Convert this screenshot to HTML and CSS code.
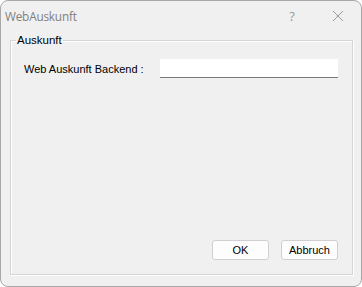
FILE: index.html
```html
<!DOCTYPE html>
<html>
<head>
<meta charset="utf-8">
<link rel="stylesheet" href="styles.css">
</head>
<body>
<div class="window">
  <div class="titlebar">
    <span class="title">WebAuskunft</span>
    <span class="help">?</span>
    <span class="close">
      <svg width="12" height="12" viewBox="0 0 12 12"><path d="M1 1L11 11M11 1L1 11" stroke="#9a9a9a" stroke-width="1" fill="none"/></svg>
    </span>
  </div>
  <div class="client">
    <fieldset class="group">
      <legend class="legend">Auskunft</legend>
      <div class="row">
        <label class="label">Web Auskunft Backend :</label>
        <input class="field" type="text">
      </div>
      <div class="buttons">
        <button class="btn">OK</button>
        <button class="btn">Abbruch</button>
      </div>
    </fieldset>
  </div>
</div>
</body>
</html>
```
FILE: styles.css
```css
html, body {
  margin: 0;
  padding: 0;
  background: #ffffff;
}
.window {
  box-sizing: border-box;
  width: 362px;
  height: 287px;
  border: 1px solid #a8a8a8;
  border-radius: 8px;
  background: #f0f0f0;
  display: flex;
  flex-direction: column;
  font-family: "Liberation Sans", Arial, sans-serif;
  font-size: 11px;
  color: #000;
  overflow: hidden;
}
.titlebar {
  height: 29px;
  display: flex;
  align-items: center;
  padding-left: 4px;
  flex-shrink: 0;
}
.title {
  color: #808080;
  font-family: "Open Sans", sans-serif;
  font-size: 11.8px;
  letter-spacing: -0.2px;
  flex: 1;
}
.help {
  color: #9a9a9a;
  font-family: "Open Sans", sans-serif;
  font-size: 13px;
  width: 46px;
  text-align: center;
}
.close {
  width: 46px;
  display: flex;
  justify-content: center;
}
.client {
  flex: 1;
  display: flex;
  flex-direction: column;
  padding: 0 8px 11px 9px;
}
.group {
  margin: 4px 0 0 0;
  padding: 13px 14px 14px 13px;
  border: 1px solid #d5d5d5;
  box-shadow: inset 1px 1px 0 #ffffff, 1px 1px 0 #ffffff;
  flex: 1;
  min-height: 0;
  display: flex;
  flex-direction: column;
}
.legend {
  padding: 0 1px;
  margin-left: -8px;
  font-size: 11.5px;
}
.row {
  display: flex;
  align-items: center;
}
.label {
  width: 136px;
  font-size: 11px;
}
.field {
  box-sizing: border-box;
  width: 178px;
  height: 19px;
  border: none;
  border-bottom: 1px solid #7a7a7a;
  background: #ffffff;
  padding: 0;
  outline: none;
}
.buttons {
  margin-top: auto;
  display: flex;
  justify-content: flex-end;
  gap: 12px;
}
.btn {
  box-sizing: border-box;
  width: 57px;
  height: 20px;
  border: 1px solid #d0d0d0;
  border-radius: 3px;
  background: #fdfdfd;
  font-family: "Liberation Sans", Arial, sans-serif;
  font-size: 11px;
  color: #000;
  padding: 0;
}
```
